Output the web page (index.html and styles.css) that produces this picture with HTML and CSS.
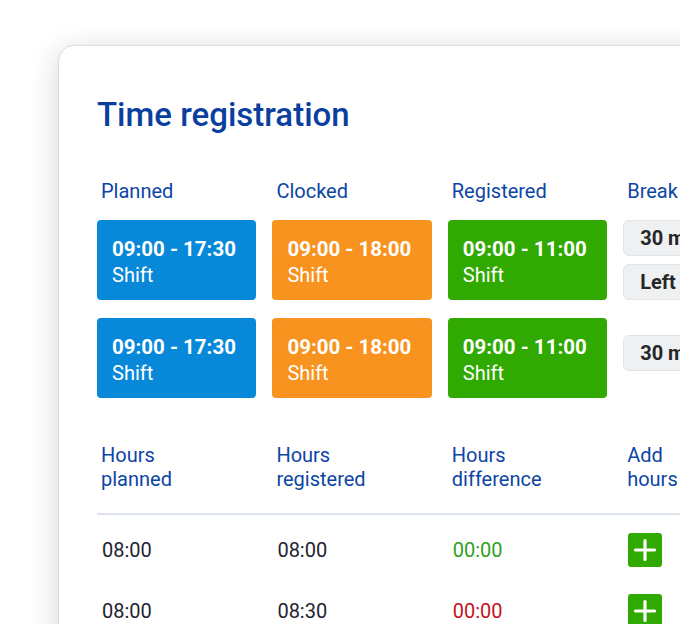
FILE: index.html
```html
<!DOCTYPE html>
<html>
<head>
<meta charset="utf-8">
<link rel="stylesheet" href="styles.css">
</head>
<body>
<div class="stage">
  <div class="card">
    <h1 class="title">Time registration</h1>
    <div class="shifts">
      <div class="label">Planned</div>
      <div class="label">Clocked</div>
      <div class="label">Registered</div>
      <div class="label">Break</div>

      <div class="shift blue"><div class="time">09:00 - 17:30</div><div class="kind">Shift</div></div>
      <div class="shift orange"><div class="time">09:00 - 18:00</div><div class="kind">Shift</div></div>
      <div class="shift green"><div class="time">09:00 - 11:00</div><div class="kind">Shift</div></div>
      <div class="breaks"><div class="pill">30 min</div><div class="pill">Left</div></div>

      <div class="shift blue"><div class="time">09:00 - 17:30</div><div class="kind">Shift</div></div>
      <div class="shift orange"><div class="time">09:00 - 18:00</div><div class="kind">Shift</div></div>
      <div class="shift green"><div class="time">09:00 - 11:00</div><div class="kind">Shift</div></div>
      <div class="breaks single"><div class="pill">30 min</div></div>
    </div>

    <div class="table">
      <div class="thead">
        <div class="th">Hours<br>planned</div>
        <div class="th">Hours<br>registered</div>
        <div class="th">Hours<br>difference</div>
        <div class="th">Add<br>hours</div>
      </div>
      <div class="tr">
        <div class="td">08:00</div>
        <div class="td">08:00</div>
        <div class="td pos">00:00</div>
        <div class="td"><span class="add"><svg viewBox="0 0 34 34" width="34" height="34"><path d="M17 7.5v19M7.5 17h19" stroke="#fff" stroke-width="3.2" stroke-linecap="round" fill="none"/></svg></span></div>
      </div>
      <div class="tr">
        <div class="td">08:00</div>
        <div class="td">08:30</div>
        <div class="td neg">00:00</div>
        <div class="td"><span class="add"><svg viewBox="0 0 34 34" width="34" height="34"><path d="M17 7.5v19M7.5 17h19" stroke="#fff" stroke-width="3.2" stroke-linecap="round" fill="none"/></svg></span></div>
      </div>
    </div>
  </div>
</div>
</body>
</html>
```

FILE: styles.css
```css
html, body {
  margin: 0;
  padding: 0;
  background: #ffffff;
  overflow: hidden;
  width: 680px;
  height: 624px;
}

.stage {
  padding: 45px 0 0 58px;
  font-family: Roboto, "Liberation Sans", sans-serif;
}

.card {
  width: 720px;
  height: 700px;
  background: #fff;
  border: 1px solid #dcdcdc;
  border-radius: 16px;
  box-shadow: 0 6px 30px rgba(0, 0, 0, 0.17);
  padding: 0 0 0 38px;
  box-sizing: border-box;
}

.title {
  margin: 0;
  padding-top: 49px;
  font-size: 33px;
  line-height: 40px;
  font-weight: 500;
  color: #0a3f9f;
}

.shifts {
  margin-top: 44px;
  display: grid;
  grid-template-columns: repeat(4, 159.4px);
  column-gap: 16px;
  row-gap: 18px;
  align-items: start;
}

.label {
  font-size: 20px;
  line-height: 24px;
  color: #0d45a5;
  padding-left: 4px;
  margin-bottom: -1px;
}

.shift {
  height: 80px;
  border-radius: 4px;
  color: #fff;
  padding: 16px 0 0 15px;
  box-sizing: border-box;
}

.shift .time {
  font-size: 20.5px;
  font-weight: 700;
  line-height: 26px;
}

.shift .kind {
  font-size: 20px;
  line-height: 26px;
}

.blue { background: #0788d9; }
.orange { background: #f7931e; }
.green { background: #30a900; }

.breaks {
  display: flex;
  flex-direction: column;
  gap: 8px;
}

.breaks.single {
  padding-top: 17px;
}

.pill {
  height: 36px;
  box-sizing: border-box;
  border: 1px solid #e1e4e7;
  background: #eef0f2;
  border-radius: 6px;
  font-size: 20px;
  font-weight: 700;
  color: #262626;
  line-height: 34px;
  padding-left: 16px;
  white-space: nowrap;
}

.table {
  margin-top: 45px;
}

.thead, .tr {
  display: grid;
  grid-template-columns: repeat(4, 159.4px);
  column-gap: 16px;
}

.thead {
  border-bottom: 2px solid #dde3ec;
  padding-bottom: 22px;
}

.th {
  font-size: 20px;
  line-height: 24px;
  color: #0d45a5;
  padding-left: 4px;
}

.tr {
  height: 61px;
  align-items: center;
}

.thead + .tr {
  margin-top: 4px;
}

.td {
  font-size: 20px;
  color: #1d2430;
  padding-left: 5px;
  display: flex;
  align-items: center;
}

.td.pos { color: #2ea21a; }
.td.neg { color: #c4121b; }

.add {
  display: block;
  width: 34px;
  height: 34px;
  background: #30a900;
  border-radius: 3px;
}

.add svg { display: block; }
```
